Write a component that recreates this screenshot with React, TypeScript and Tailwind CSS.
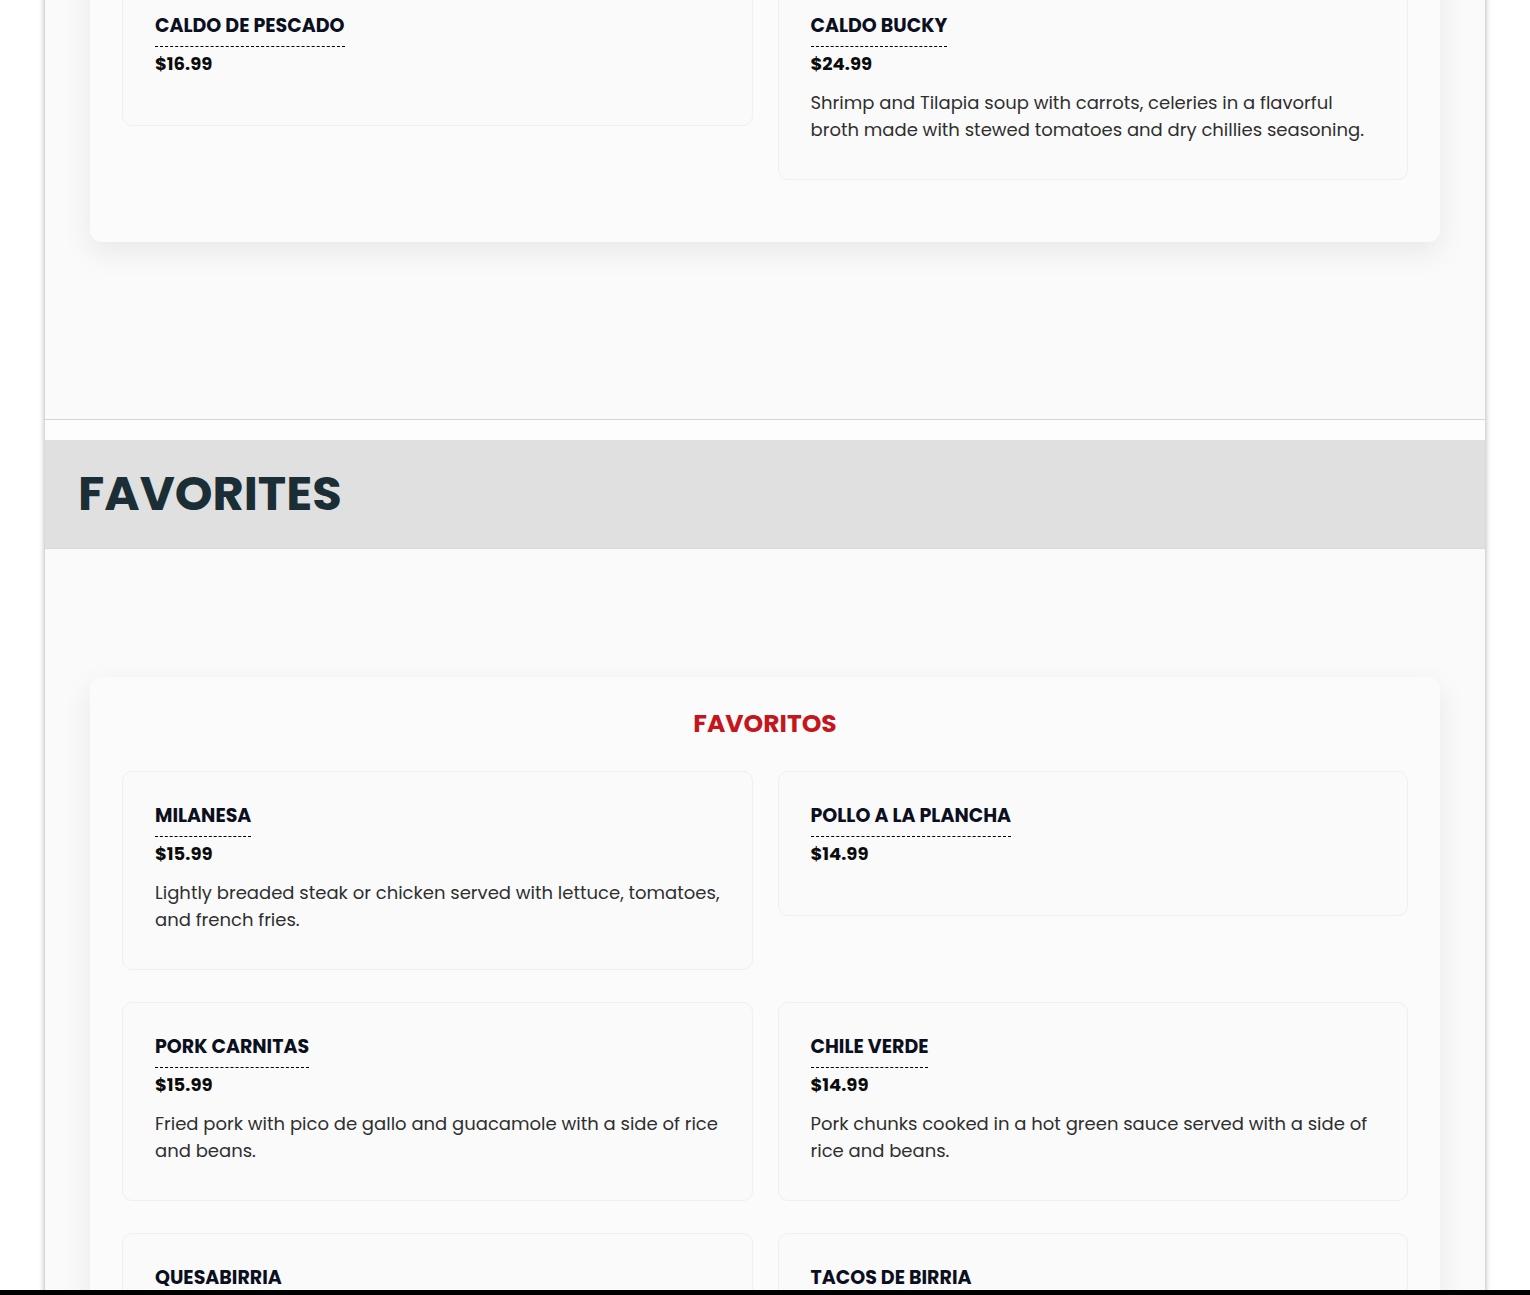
import React from "react";

type Item = { name: string; price: string; desc?: string };

const soups: Item[] = [
  { name: "Caldo de Pescado", price: "$16.99" },
  {
    name: "Caldo Bucky",
    price: "$24.99",
    desc: "Shrimp and Tilapia soup with carrots, celeries in a flavorful broth made with stewed tomatoes and dry chillies seasoning.",
  },
];

const favoritos: Item[] = [
  {
    name: "Milanesa",
    price: "$15.99",
    desc: "Lightly breaded steak or chicken served with lettuce, tomatoes, and french fries.",
  },
  { name: "Pollo a la Plancha", price: "$14.99" },
  {
    name: "Pork Carnitas",
    price: "$15.99",
    desc: "Fried pork with pico de gallo and guacamole with a side of rice and beans.",
  },
  {
    name: "Chile Verde",
    price: "$14.99",
    desc: "Pork chunks cooked in a hot green sauce served with a side of rice and beans.",
  },
  { name: "Quesabirria", price: "$15.99", desc: "Cheesy birria tacos served with consomé." },
  { name: "Tacos de Birria", price: "$14.99", desc: "Three birria tacos served with consomé." },
];

function MenuItem({ item }: { item: Item }) {
  return (
    <div className="rounded-[10px] border border-[#efefef] bg-[#fafafa] px-8 pt-8 pb-[36px]">
      <h3 className="inline-block border-b border-dashed border-black pb-[8px] text-[19px] font-bold uppercase leading-[24px] text-[#0b0f1e]">
        {item.name}
      </h3>
      <p className="mt-[5px] mb-[13px] text-[18px] font-bold leading-[24px] text-[#0b0b0b]">{item.price}</p>
      {item.desc && <p className="text-[18px] leading-[27px] text-[#2f2f2f]">{item.desc}</p>}
    </div>
  );
}

function MenuCard({ title, items, bottom }: { title?: string; items: Item[]; bottom: string }) {
  return (
    <div className={`rounded-[12px] bg-[#fbfbfb] px-8 pt-8 shadow-[0_10px_30px_rgba(0,0,0,0.08)] ${bottom}`}>
      {title && (
        <h2 className="mb-[32px] text-center text-[25px] font-bold uppercase leading-[30px] text-[#c4161c]">
          {title}
        </h2>
      )}
      <div className="grid grid-cols-2 items-start gap-x-[25px] gap-y-[32px]">
        {items.map((it) => (
          <MenuItem key={it.name} item={it} />
        ))}
      </div>
    </div>
  );
}

export default function App() {
  return (
    <div
      className="min-h-screen overflow-hidden bg-white"
      style={{ fontFamily: '"Poppins", "Inter", "Noto Sans", sans-serif' }}
    >
      <div className="mx-[45px] bg-[#fafafa] shadow-[0_0_6px_rgba(0,0,0,0.35)]">
        {/* Soups card (scrolled partly out of view) */}
        <div className="mt-[-51px] px-[45px]">
          <MenuCard items={soups} bottom="pb-[62px]" />
        </div>

        <div className="h-[177px]" />

        {/* Section header */}
        <div className="border-t border-[#d6d6d6]">
          <div className="h-[20px] bg-[#fdfdfd]" />
          <div className="flex h-[109px] items-center border-b border-[#d9d9d9] bg-[#e0e0e0] px-[33px]">
            <h1 className="text-[48px] font-bold uppercase leading-none text-[#1b2e35]">Favorites</h1>
          </div>
        </div>

        <div className="h-[128px]" />

        <div className="px-[45px] pb-16">
          <MenuCard title="Favoritos" items={favoritos} bottom="pb-8" />
        </div>
      </div>

      <div className="fixed bottom-0 left-0 h-[5px] w-full bg-black" />
    </div>
  );
}
